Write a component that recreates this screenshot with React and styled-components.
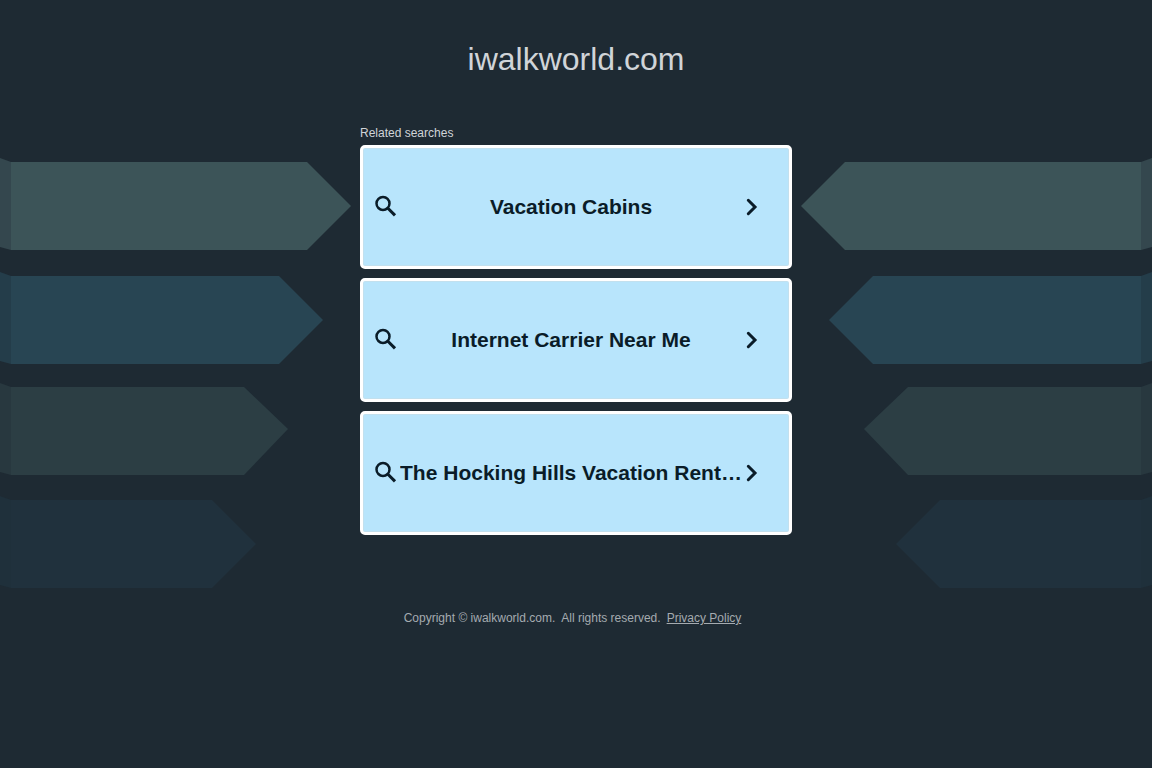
import styled, { createGlobalStyle } from "styled-components";

const GlobalStyle = createGlobalStyle`
  * {
    box-sizing: border-box;
  }

  body {
    margin: 0;
    background: #1e2a33;
    font-family: Arial, "Liberation Sans", sans-serif;
  }
`;

const Page = styled.div`
  position: relative;
  min-height: 100vh;
  overflow: hidden;
`;

const Ribbons = styled.svg`
  position: absolute;
  top: 152px;
  left: ${(props) => (props.$mirrored ? "auto" : 0)};
  right: ${(props) => (props.$mirrored ? 0 : "auto")};
  transform: ${(props) => (props.$mirrored ? "scaleX(-1)" : "none")};
`;

const Content = styled.div`
  position: relative;
  display: flex;
  flex-direction: column;
  align-items: center;
`;

const Title = styled.h1`
  margin: 40px 0 48px;
  font-size: 32px;
  font-weight: 400;
  line-height: 38px;
  color: #d0d4d8;
`;

const Searches = styled.main`
  width: 37.5%;
  min-width: 320px;
`;

const SearchesLabel = styled.h2`
  margin: 0 0 4px;
  font-size: 12px;
  font-weight: 400;
  line-height: 15px;
  color: #d0d4d8;
`;

const SearchList = styled.ul`
  display: flex;
  flex-direction: column;
  gap: 9px;
  margin: 0;
  padding: 0;
  list-style: none;
`;

const SearchLink = styled.a`
  display: flex;
  align-items: center;
  height: 124px;
  padding: 0 29px 0 9px;
  background: #b8e5fc;
  border: 3px solid #fff;
  border-radius: 5px;
  box-shadow: inset 0 0 0 1px #c2e0ee;
  color: #0a1c28;
  text-decoration: none;
`;

const Icon = styled.svg`
  flex: none;
  fill: none;
  stroke: currentColor;
`;

const SearchText = styled.span`
  flex: 1;
  min-width: 0;
  overflow: hidden;
  font-size: 21px;
  font-weight: 700;
  line-height: 28px;
  text-align: center;
  text-overflow: ellipsis;
  white-space: nowrap;
`;

const Footer = styled.footer`
  display: flex;
  gap: 6px;
  margin-top: 75px;
  padding-right: 7px;
  font-size: 12px;
  line-height: 16px;
  color: #a5abb0;
  white-space: pre;
`;

const PrivacyLink = styled.a`
  color: inherit;
`;

const ribbons = [
  { y: 10, shaft: 307, tip: 351, mid: 44, fill: "#3c5458", fold: "#34474e" },
  { y: 124, shaft: 279, tip: 323, mid: 44, fill: "#284553", fold: "#243d4a" },
  { y: 235, shaft: 244, tip: 288, mid: 42, fill: "#2c3e44", fold: "#28383f" },
  { y: 348, shaft: 212, tip: 256, mid: 44, fill: "#20313d", fold: "#1f303b" },
];

const searches = [
  "Vacation Cabins",
  "Internet Carrier Near Me",
  "The Hocking Hills Vacation Rent…",
];

const RibbonArt = ({ mirrored }) => (
  <Ribbons
    width="352"
    height="440"
    viewBox="0 0 352 440"
    aria-hidden="true"
    $mirrored={mirrored}
  >
    {ribbons.map(({ y, shaft, tip, mid, fill, fold }) => (
      <g key={y}>
        <path d={`M0 ${y - 4}L11 ${y}V${y + 88}L0 ${y + 85}Z`} fill={fold} />
        <path
          d={`M11 ${y}H${shaft}L${tip} ${y + mid}L${shaft} ${y + 88}H11Z`}
          fill={fill}
        />
      </g>
    ))}
  </Ribbons>
);

const SearchIcon = () => (
  <Icon width="28" height="28" viewBox="0 0 28 28" aria-hidden="true">
    <circle cx="11" cy="10.4" r="6.5" strokeWidth="2.5" />
    <path d="M15.4 14.8l7.6 7.6" strokeWidth="3" />
  </Icon>
);

const ChevronIcon = () => (
  <Icon width="18" height="24" viewBox="0 0 18 24" aria-hidden="true">
    <path d="M6.3 5.3L13 12l-6.7 6.7" strokeWidth="3" strokeLinecap="round" />
  </Icon>
);

const App = () => {
  return (
    <>
      <GlobalStyle />
      <Page>
        <RibbonArt />
        <RibbonArt mirrored />
        <Content>
          <Title>iwalkworld.com</Title>
          <Searches>
            <SearchesLabel>Related searches</SearchesLabel>
            <SearchList>
              {searches.map((search) => (
                <li key={search}>
                  <SearchLink href="#">
                    <SearchIcon />
                    <SearchText>{search}</SearchText>
                    <ChevronIcon />
                  </SearchLink>
                </li>
              ))}
            </SearchList>
          </Searches>
          <Footer>
            <span>{"Copyright © iwalkworld.com.  All rights reserved."}</span>
            <PrivacyLink href="#">Privacy Policy</PrivacyLink>
          </Footer>
        </Content>
      </Page>
    </>
  );
};

export default App;
